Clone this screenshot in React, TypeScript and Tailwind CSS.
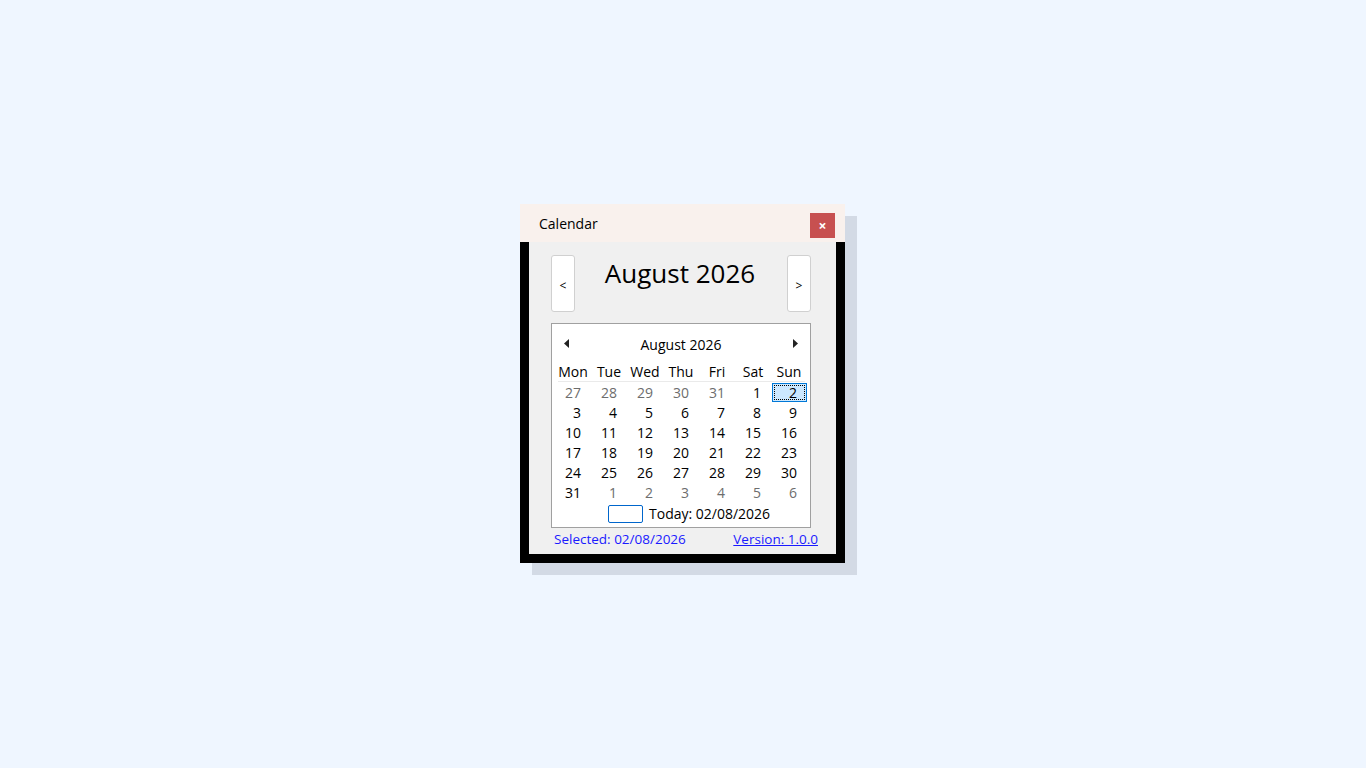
import React from "react";

const weeks: { d: number; muted?: boolean; sel?: boolean }[][] = [
  [{ d: 27, muted: true }, { d: 28, muted: true }, { d: 29, muted: true }, { d: 30, muted: true }, { d: 31, muted: true }, { d: 1 }, { d: 2, sel: true }],
  [{ d: 3 }, { d: 4 }, { d: 5 }, { d: 6 }, { d: 7 }, { d: 8 }, { d: 9 }],
  [{ d: 10 }, { d: 11 }, { d: 12 }, { d: 13 }, { d: 14 }, { d: 15 }, { d: 16 }],
  [{ d: 17 }, { d: 18 }, { d: 19 }, { d: 20 }, { d: 21 }, { d: 22 }, { d: 23 }],
  [{ d: 24 }, { d: 25 }, { d: 26 }, { d: 27 }, { d: 28 }, { d: 29 }, { d: 30 }],
  [{ d: 31 }, { d: 1, muted: true }, { d: 2, muted: true }, { d: 3, muted: true }, { d: 4, muted: true }, { d: 5, muted: true }, { d: 6, muted: true }],
];

const names = ["Mon", "Tue", "Wed", "Thu", "Fri", "Sat", "Sun"];

export default function App() {
  return (
    <div
      className="w-full h-[768px] bg-[#eff6ff] flex items-center justify-center pr-px pb-px"
      style={{ fontFamily: '"Segoe UI", "Open Sans", sans-serif' }}
    >
      <div className="w-[325px] h-[359px] bg-black shadow-[12px_12px_0_#d3dae5] flex flex-col">
        {/* Title bar */}
        <div className="h-[38px] bg-[#f9f1ed] flex items-start justify-between pl-[19px] pr-[10px]">
          <span className="text-[14px] text-black leading-[20px] mt-[10px]">Calendar</span>
          <button className="mt-[9px] w-[25px] h-[25px] bg-[#c75050] text-white flex items-center justify-center text-[14px] font-bold leading-none">
            ×
          </button>
        </div>
        {/* Body */}
        <div className="flex-1 px-[9px] pb-[9px]">
          <div className="h-full bg-[#f0f0f0] flex flex-col pt-[13px] pl-[22px] pr-[25px]">
            <div className="flex items-start h-[57px]">
              <button className="w-[24px] h-[57px] bg-white border border-[#d0d0d0] rounded-[3px] flex items-center justify-center text-[12px] text-black pt-[5px]">
                &lt;
              </button>
              <div className="flex-1 text-center text-[26px] leading-none text-black pt-[5px] pr-[2px]">August 2026</div>
              <button className="w-[24px] h-[57px] bg-white border border-[#d0d0d0] rounded-[3px] flex items-center justify-center text-[12px] text-black pt-[5px]">
                &gt;
              </button>
            </div>
            <div className="mt-[11px] w-[260px] h-[205px] bg-white border border-[#a0a0a0] pl-[3px] pr-[3px] pt-[10px]">
              <div className="h-[22px] flex items-center justify-between pl-[9px] pr-[9px]">
                <svg width="5" height="9" viewBox="0 0 5 9" className="-mt-[3px]">
                  <path d="M5 0 L0 4.5 L5 9 Z" fill="#222" />
                </svg>
                <span className="text-[14px] text-black leading-none">August 2026</span>
                <svg width="5" height="9" viewBox="0 0 5 9" className="-mt-[3px]">
                  <path d="M0 0 L5 4.5 L0 9 Z" fill="#222" />
                </svg>
              </div>
              <div className="mt-[6px] h-[20px] grid grid-cols-[repeat(7,36px)] relative">
                {names.map((n) => (
                  <div key={n} className="text-center text-[14px] leading-[20px] text-black">
                    {n}
                  </div>
                ))}
                <div className="absolute left-[3px] right-[2px] bottom-0 h-px bg-[#eaeaea]" />
              </div>
              <div className="mt-px">
                {weeks.map((w, i) => (
                  <div key={i} className="grid grid-cols-[repeat(7,36px)] h-[20px]">
                    {w.map((c, j) => (
                      <div key={j} className="h-[20px] relative">
                        {c.sel ? (
                          <div className="absolute left-px top-0 w-[35px] h-[19px] bg-[#cce8ff] border border-[#0078d7] p-px">
                            <div className="w-full h-full border border-dotted border-black" />
                          </div>
                        ) : null}
                        <div
                          className={`relative text-right pr-[10px] text-[14px] leading-[20px] ${
                            c.muted ? "text-[#6d6d6d]" : "text-black"
                          }`}
                        >
                          {c.d}
                        </div>
                      </div>
                    ))}
                  </div>
                ))}
              </div>
              <div className="flex items-center h-[22px] pl-[53px] gap-[6px]">
                <div className="w-[35px] h-[18px] border border-[#0066cc] rounded-[2px]" />
                <span className="text-[14px] text-black leading-none">Today: 02/08/2026</span>
              </div>
            </div>
            <div className="flex items-center justify-between h-[22px] pt-px pl-[3px] mr-[-7px] text-[13.5px] text-[#1a1aff]">
              <span>Selected: 02/08/2026</span>
              <span className="underline">Version: 1.0.0</span>
            </div>
          </div>
        </div>
      </div>
    </div>
  );
}
